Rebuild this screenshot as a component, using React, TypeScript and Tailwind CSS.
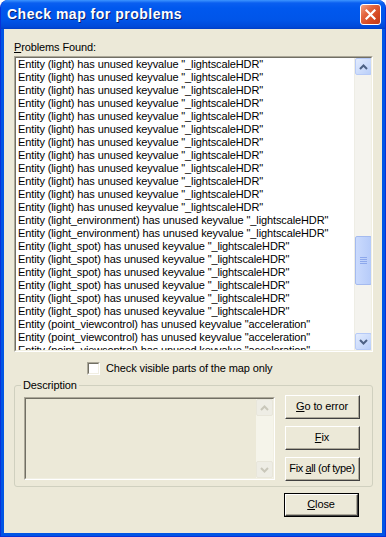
import React from "react";

const rows: string[] = [
  ...Array(12).fill('Entity (light) has unused keyvalue "_lightscaleHDR"'),
  ...Array(2).fill('Entity (light_environment) has unused keyvalue "_lightscaleHDR"'),
  ...Array(6).fill('Entity (light_spot) has unused keyvalue "_lightscaleHDR"'),
  ...Array(3).fill('Entity (point_viewcontrol) has unused keyvalue "acceleration"'),
];

function ArrowUp({ color = "#4D6185" }: { color?: string }) {
  return (
    <svg width="9" height="6" viewBox="0 0 9 6">
      <path d="M1 5 L4.5 1.5 L8 5" fill="none" stroke={color} strokeWidth="2" />
    </svg>
  );
}

function ArrowDown({ color = "#4D6185" }: { color?: string }) {
  return (
    <svg width="9" height="6" viewBox="0 0 9 6">
      <path d="M1 1 L4.5 4.5 L8 1" fill="none" stroke={color} strokeWidth="2" />
    </svg>
  );
}

function Button({ children, def }: { children: React.ReactNode; def?: boolean }) {
  return (
    <div className={"w-[75px] h-[24px] " + (def ? "border border-black" : "")}>
      <div className="w-full h-full bg-[#ECE9D8] border border-t-white border-l-white border-r-[#404040] border-b-[#404040]">
        <div className="w-full h-full flex items-center justify-center whitespace-nowrap border-r border-b border-[#ACA899] border-t-0 border-l-0">
          {children}
        </div>
      </div>
    </div>
  );
}

export default function App() {
  return (
    <div
      className="w-[386px] h-[537px] flex flex-col bg-[#0055E5] border border-[#0831D9] border-t-0 rounded-t-[8px] overflow-hidden text-[11px] text-black tracking-[-0.12px]"
      style={{ fontFamily: '"Liberation Sans", Arial, sans-serif' }}
    >
      {/* Title bar */}
      <div className="h-[29px] shrink-0 flex items-center justify-between pl-[6px] pr-[4px] bg-[linear-gradient(to_bottom,#3D95FF_0px,#0A5FF0_3px,#0058EE_8px,#0055E9_20px,#0049D8_27px,#003DC5_29px)]">
        <span className="text-white font-bold text-[14px] tracking-[0.5px] [text-shadow:1px_1px_0_#0A1E6E]">
          Check map for problems
        </span>
        <div className="w-[21px] h-[21px] rounded-[3px] border border-white bg-[linear-gradient(135deg,#F3A282_0%,#E3653E_35%,#D4461F_70%,#C03A1A_100%)] flex items-center justify-center">
          <svg width="11" height="11" viewBox="0 0 11 11">
            <path d="M1.5 1.5 L9.5 9.5 M9.5 1.5 L1.5 9.5" stroke="white" strokeWidth="2.2" strokeLinecap="square" />
          </svg>
        </div>
      </div>

      {/* Client area */}
      <div className="flex-1 mx-[3px] mb-[3px] bg-[#ECE9D8] pl-[10px] pr-[9px] pt-[11px] flex flex-col">
        <div className="h-[16px] leading-[14px]">
          <span className="underline">P</span>roblems Found:
        </div>

        {/* List box */}
        <div className="h-[296px] w-[359px] border border-t-[#ACA899] border-l-[#ACA899] border-r-white border-b-white">
          <div className="h-full w-full border border-t-[#716F64] border-l-[#716F64] border-r-[#F1EFE2] border-b-[#F1EFE2] bg-white flex overflow-hidden">
            <div className="flex-1 overflow-hidden pl-[2px] pt-0">
              {rows.map((r, i) => (
                <div key={i} className="h-[13px] leading-[13px] whitespace-nowrap">
                  {r}
                </div>
              ))}
            </div>
            {/* Scrollbar */}
            <div className="w-[17px] h-full bg-[#F4F3EE] flex flex-col items-center border-l border-[#EEEDE5]">
              <div className="w-[17px] h-[17px] rounded-[2px] border border-[#B6CAF7] bg-[linear-gradient(135deg,#E3ECFE,#B9CEF9)] flex items-center justify-center">
                <ArrowUp />
              </div>
              <div className="h-[161px]" />
              <div className="w-[17px] h-[49px] rounded-[2px] border border-[#A4BAEF] bg-[linear-gradient(to_right,#CADAFD,#B6CBF9)] flex flex-col items-center justify-center gap-[1px]">
                <div className="w-[7px] h-[1px] bg-[#8DA8EC]" />
                <div className="w-[7px] h-[1px] bg-[#8DA8EC]" />
                <div className="w-[7px] h-[1px] bg-[#8DA8EC]" />
                <div className="w-[7px] h-[1px] bg-[#8DA8EC]" />
              </div>
              <div className="flex-1" />
              <div className="w-[17px] h-[17px] rounded-[2px] border border-[#B6CAF7] bg-[linear-gradient(135deg,#E3ECFE,#B9CEF9)] flex items-center justify-center">
                <ArrowDown />
              </div>
            </div>
          </div>
        </div>

        {/* Checkbox */}
        <div className="mt-[10px] ml-[73px] flex items-center h-[13px]">
          <div className="w-[13px] h-[13px] border border-t-[#ACA899] border-l-[#ACA899] border-r-white border-b-white">
            <div className="w-full h-full bg-white border border-t-[#716F64] border-l-[#716F64] border-r-[#F1EFE2] border-b-[#F1EFE2]" />
          </div>
          <span className="ml-[6px]">Check visible parts of the map only</span>
        </div>

        {/* Description group */}
        <div className="relative mt-[10px] w-[359px] h-[102px] border border-[#D0D0BF] rounded-[3px] flex pt-[11px] pl-[9px]">
          <span className="absolute left-[6px] -top-[8px] px-[2px] bg-[#ECE9D8] leading-[14px]">Description</span>
          <div className="w-[251px] h-[83px] border border-t-[#ACA899] border-l-[#ACA899] border-r-white border-b-white">
            <div className="w-full h-full border border-t-[#716F64] border-l-[#716F64] border-r-[#F1EFE2] border-b-[#F1EFE2] bg-[#ECE9D8] flex justify-end">
              <div className="w-[17px] h-full bg-[#F5F4EA] flex flex-col justify-between">
                <div className="w-[17px] h-[17px] rounded-[2px] border border-[#E8E6DA] bg-[#EEEDE5] flex items-center justify-center">
                  <ArrowUp color="#C9C7BA" />
                </div>
                <div className="w-[17px] h-[17px] rounded-[2px] border border-[#E8E6DA] bg-[#EEEDE5] flex items-center justify-center">
                  <ArrowDown color="#C9C7BA" />
                </div>
              </div>
            </div>
          </div>
          <div className="ml-[10px] -mt-[2px] flex flex-col gap-[7px]">
            <Button>
              <span>
                <span className="underline">G</span>o to error
              </span>
            </Button>
            <Button>
              <span>
                <span className="underline">F</span>ix
              </span>
            </Button>
            <Button>
              <span className="tracking-[-0.4px]">
                Fix <span className="underline">a</span>ll (of type)
              </span>
            </Button>
          </div>
        </div>

        {/* Close */}
        <div className="mt-[6px] ml-[270px]">
          <Button def>
            <span>
              <span className="underline">C</span>lose
            </span>
          </Button>
        </div>
      </div>
    </div>
  );
}
